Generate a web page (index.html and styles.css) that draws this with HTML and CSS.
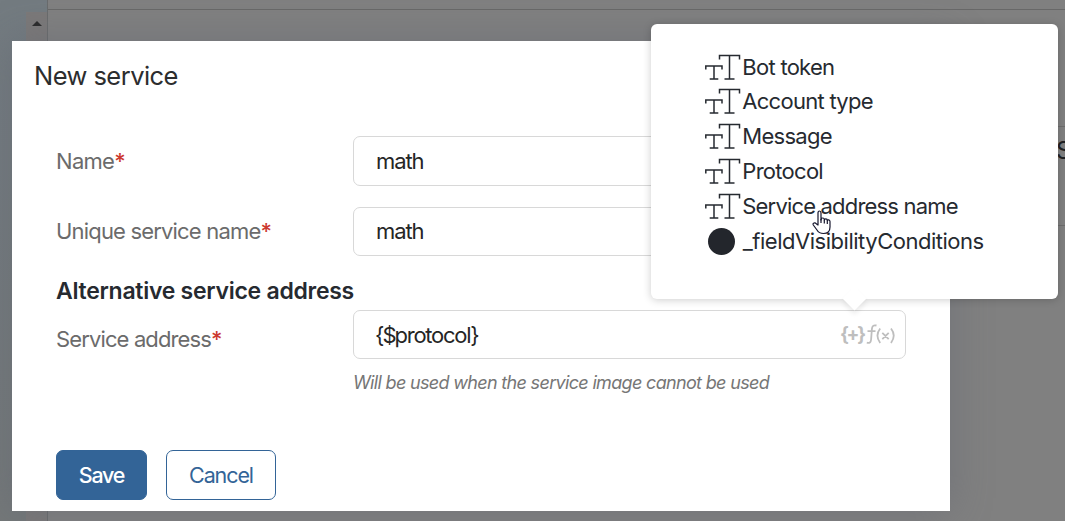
FILE: index.html
```html
<!DOCTYPE html>
<html lang="en">
<head>
<meta charset="utf-8">
<title>New service</title>
<link rel="stylesheet" href="styles.css">
</head>
<body>
<svg width="0" height="0" class="defs">
  <symbol id="tt" viewBox="0 0 36 26">
    <path d="M14.500 5.500V1.500H34.500V5.500M24.500 1.500V25M19.500 25H29.500M.8 15.500V12H17V15.500M9 12V25M4.700 25H13.300" fill="none" stroke="currentColor" stroke-width="1.500"/>
  </symbol>
</svg>
<div class="page">
  <div class="sidebar"><div class="scroll-up"><i></i></div></div>
  <div class="main"><div class="topbar"></div><div class="panel"><span>S</span></div></div>
</div>
<form class="dialog">
  <h1>New service</h1>
  <div class="row"><label class="l-name">Name<b>*</b></label><div class="input">math</div></div>
  <div class="row second"><label class="l-unique">Unique service name<b>*</b></label><div class="input short">math</div></div>
  <h2>Alternative service address</h2>
  <div class="row third"><label class="l-address">Service address<b>*</b></label>
    <div class="input short"><span class="value"><span class="brace">{$</span>protocol}</span><span class="tools"><span class="plus">{+}</span><svg width="30" height="24" viewBox="0 0 30 24" fill="none" stroke="currentColor" stroke-width="1.800"><path d="M10.500 2.500C7.500 1.800 6.100 3 5.900 6L5.100 16.500C4.900 19.500 3.500 20.300 .8 19.600M1.500 8.200H9.500M14.200 5.500Q8.700 12.500 14.200 20M25 5.500Q30.500 12.500 25 20M16.300 9.800L22.700 16.200M22.700 9.800L16.300 16.200"/></svg></span></div>
  </div>
  <p class="hint">Will be used when the service image cannot be used</p>
  <div class="buttons"><button type="button" class="save">Save</button><button type="button" class="cancel">Cancel</button></div>
</form>
<div class="popup">
  <div class="item"><svg><use href="#tt"/></svg><span class="t1">Bot token</span></div>
  <div class="item"><svg><use href="#tt"/></svg><span class="t2">Account type</span></div>
  <div class="item"><svg><use href="#tt"/></svg><span class="t3">Message</span></div>
  <div class="item"><svg><use href="#tt"/></svg><span class="t4">Protocol</span></div>
  <div class="item"><svg><use href="#tt"/></svg><span class="t5">Service address name</span></div>
  <div class="item"><i class="dot"></i><span class="t6">_fieldVisibilityConditions</span></div>
</div>
<svg class="cursor" width="20" height="25" viewBox="0 0 20 25"><path d="M6 15V3Q6 1 7.500 1T9 3V10Q9 8 10.700 8T12.300 10Q12.300 8.800 13.800 8.800T15.300 10.500Q15.500 9.700 16.700 9.900T18 11.500V17Q18 23.500 11.500 23.500Q7 23.500 5 20L1.300 15Q.5 13.500 2 13Q3.500 12.700 4.500 14Z" fill="#fff" stroke="#15152c" stroke-width="1.200" stroke-linejoin="round"/><path d="M9 9V13M12.300 10V13.500M15.300 10.500V14" stroke="#15152c" stroke-width="1.200"/></svg>
</body>
</html>
```
FILE: styles.css
```css
* { box-sizing: border-box; }
body { margin: 0; width: 1065px; height: 521px; overflow: hidden; position: relative; background: #808080; font: 22px/30px Inter, "Liberation Sans", sans-serif; letter-spacing: -.72px; color: #262a30; }
.defs { position: absolute; }
.page { display: flex; height: 521px; }
.sidebar { flex: 0 0 48px; border-right: 1px solid #696b6c; background: linear-gradient(#737b80, #747879); padding-top: 12px; display: flex; justify-content: flex-end; }
.scroll-up { width: 21px; background: #7b7979; display: flex; justify-content: center; align-items: flex-start; padding-top: 9px; }
.scroll-up i { border: 5px solid transparent; border-top: 0; border-bottom-color: #292929; }
.main { flex: 1; min-width: 0; }
.topbar { height: 10px; border-bottom: 1px solid #686868; }
.panel { margin-top: 116px; height: 100px; border: solid #6d6d6d; border-width: 1px 0; padding: 9px 0 0; font-size: 24px; color: #1e2023; overflow: hidden; display: flex; justify-content: flex-end; }
.panel span { width: 9px; }
.dialog { position: absolute; left: 12px; top: 41px; width: 938px; height: 470px; padding: 17px 44px 0; background: #fff; box-shadow: 0 0 38px rgba(90, 95, 110, .42); }
h1 { margin: 0 0 43px -22px; font-size: 25.500px; line-height: 35px; height: 35px; font-weight: 400; letter-spacing: -.55px; color: #2c2d2e; }
.row { display: flex; height: 50px; }
.second { margin-top: 21px; }
.row label { width: 297px; line-height: 50px; color: #6b6b6b; white-space: nowrap; }
.row .l-name { letter-spacing: -.7px; }
.row .l-unique { letter-spacing: -.82px; line-height: 48px; }
.row .l-address { letter-spacing: -.87px; padding-top: 4px; }
.row b { color: #cc392f; font-weight: 500; }
.input { width: 553px; height: 50px; border: 1px solid #d8d8d8; border-radius: 7px; padding: 0 9px 0 22px; display: flex; align-items: center; justify-content: space-between; color: #252525; letter-spacing: -1.100px; }
.short { height: 49px; }
.second .input { padding-bottom: 1px; }
.value { margin-left: -1px; letter-spacing: -1.250px; }
.brace { letter-spacing: -2px; }
h2 { margin: 19px 0 4px; font-size: 23px; line-height: 30px; font-weight: 600; letter-spacing: -.27px; }
.tools { display: flex; align-items: center; color: #bebebe; }
.plus { font-size: 19px; font-weight: 700; letter-spacing: -2.200px; margin-right: 2px; }
.hint { margin: 8px 0 0 297px; font-size: 18px; line-height: 30px; font-style: italic; font-weight: 450; color: #767676; letter-spacing: -.670px; }
.buttons { display: flex; gap: 19px; margin-top: 52px; }
button { height: 50px; width: 91px; border: 1px solid #336497; border-radius: 7px; padding: 0; font: inherit; font-size: 21.500px; letter-spacing: -1.100px; }
.save { background: #336497; color: #fff; font-weight: 500; letter-spacing: -1.200px; }
.cancel { width: 110px; background: #fff; color: #336497; }
.popup { position: absolute; left: 651px; top: 24px; width: 407px; height: 275px; padding: 25.300px 0 0 54px; border-radius: 6px; background: #fff; box-shadow: 0 1px 8px rgba(0, 0, 0, .2); }
.popup::after { content: ""; position: absolute; left: 195px; top: 266px; width: 17px; height: 17px; transform: rotate(45deg); background: #fff; box-shadow: 3px 3px 5px rgba(0, 0, 0, .08); }
.item { display: flex; align-items: center; height: 34.800px; white-space: nowrap; }
.item svg { width: 36px; height: 26px; margin-right: 1.300px; }
.t5 { letter-spacing: -.82px; }
.t6 { letter-spacing: -.48px; }
.dot { width: 27px; height: 27px; margin: 1px 8.300px 0 2.500px; border-radius: 50%; background: #23262c; }
.cursor { position: absolute; left: 812px; top: 210px; }
```
